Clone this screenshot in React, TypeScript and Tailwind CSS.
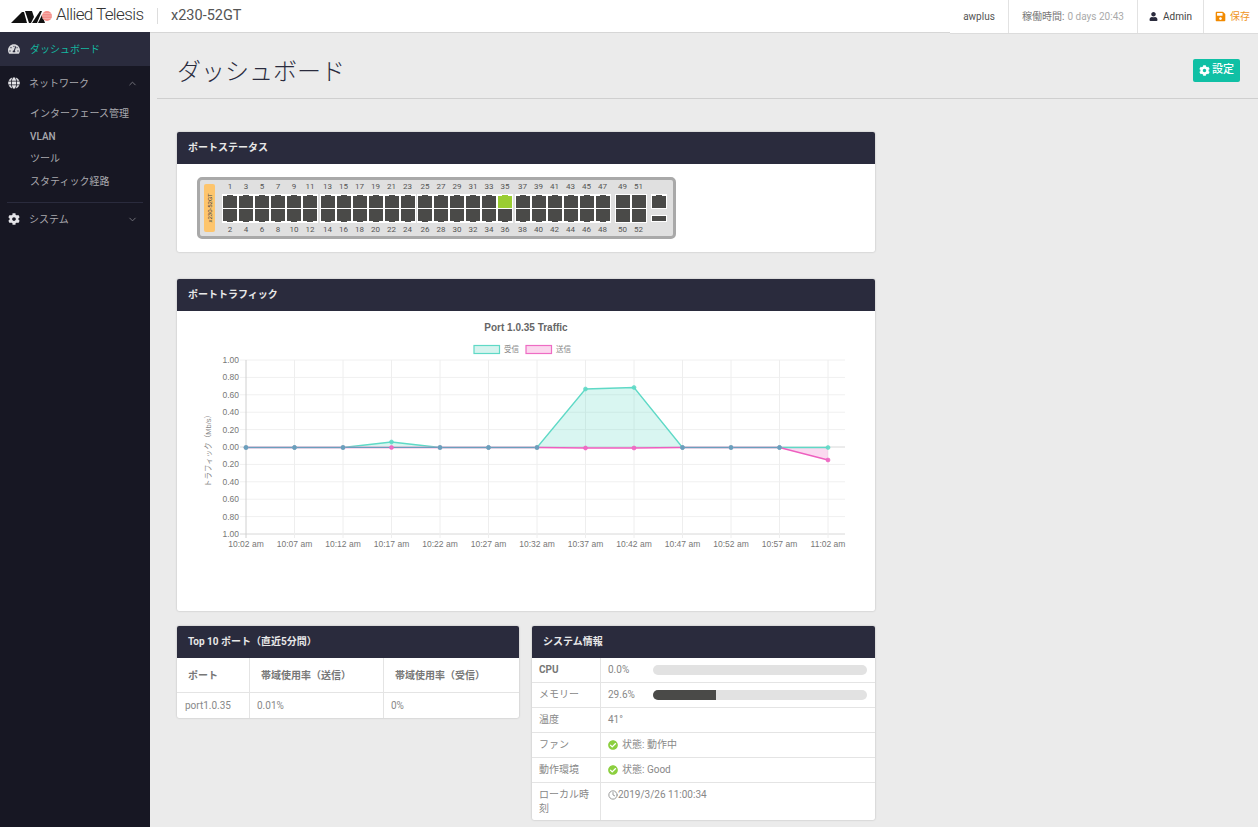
import React from "react";
import { ChevronUp, ChevronDown } from "lucide-react";
import { FaTachometerAlt, FaGlobe, FaCog, FaCheckCircle, FaSave, FaUser } from "react-icons/fa";
import { FiClock } from "react-icons/fi";

const FONT = "[font-family:Roboto,'Noto_Sans_CJK_JP',sans-serif]";
const CHART_FONT = "'Liberation Sans', 'Noto Sans CJK JP', sans-serif";

function Logo() {
  return (
    <svg width="41" height="13" viewBox="0 0 41 13" className="shrink-0">
      <polygon points="0,13 11,2 13,2 16,13" fill="#111" />
      <polygon points="14,1 21,1 23,7 20,13 18,13" fill="#111" />
      <polygon points="21,13 29,1 31,1 26,13" fill="#111" />
      <polygon points="27,13 31,5 34,13" fill="#111" />
      <circle cx="36" cy="6" r="5" fill="#f58f8a" />
      <g stroke="#fff" strokeWidth="0.5" opacity="0.55">
        <line x1="31" y1="3.5" x2="41" y2="3.5" />
        <line x1="31" y1="6" x2="41" y2="6" />
        <line x1="31" y1="8.5" x2="41" y2="8.5" />
      </g>
    </svg>
  );
}

function PortIcon({ bottom, on }: { bottom?: boolean; on?: boolean }) {
  const fill = on ? "#9acd32" : "#4a4a48";
  return (
    <svg width="14" height="13" viewBox="0 0 14 13" className="block">
      {bottom ? (
        <polygon points="0,0 14,0 14,12 10,12 10,13 4,13 4,12 0,12" fill={fill} />
      ) : (
        <polygon points="0,1 4,1 4,0 10,0 10,1 14,1 14,13 0,13" fill={fill} />
      )}
    </svg>
  );
}

function PortGroup({ start, count, sfp }: { start: number; count: number; sfp?: boolean }) {
  const cols = Array.from({ length: count }, (_, i) => start + i * 2);
  return (
    <div className="flex shrink-0 flex-col">
      <div className="flex h-[14px] shrink-0 items-center">
        {cols.map((n) => (
          <span key={n} className="w-4 text-center text-[8px] leading-none text-[#555]">{n}</span>
        ))}
      </div>
      <div className="flex w-fit shrink-0 flex-col gap-[1px] bg-white p-[1px]">
        <div className="flex gap-[2px]">
          {cols.map((n) =>
            sfp ? <div key={n} className="h-[13px] w-[14px] bg-[#4a4a48]" /> : <PortIcon key={n} on={n === 35} />
          )}
        </div>
        <div className="flex gap-[2px]">
          {cols.map((n) =>
            sfp ? <div key={n} className="h-[13px] w-[14px] bg-[#4a4a48]" /> : <PortIcon key={n} bottom />
          )}
        </div>
      </div>
      <div className="flex h-[13px] shrink-0 items-center">
        {cols.map((n) => (
          <span key={n} className="w-4 text-center text-[8px] leading-none text-[#555]">{n + 1}</span>
        ))}
      </div>
    </div>
  );
}

const xs = [246, 294.5, 343, 391.5, 440, 488.5, 537, 585.5, 634, 682.5, 731, 779.5, 828];
const labels = ["10:02 am", "10:07 am", "10:12 am", "10:17 am", "10:22 am", "10:27 am", "10:32 am", "10:37 am", "10:42 am", "10:47 am", "10:52 am", "10:57 am", "11:02 am"];
const rx = [447.5, 447.5, 447.5, 442, 447.5, 447.5, 447.5, 389, 387.5, 447.5, 447.5, 447.5, 447.5];
const tx = [447.5, 447.5, 447.5, 447.5, 447.5, 447.5, 447.5, 448, 448, 447.5, 447.5, 447.5, 460];
const yLabels = ["1.00", "0.80", "0.60", "0.40", "0.20", "0.00", "0.20", "0.40", "0.60", "0.80", "1.00"];

function Chart() {
  // Coordinates below are page coordinates; the viewBox maps them onto the card's body.
  const ys = yLabels.map((_, i) => 360 + i * 17.4);
  const rPts = xs.map((x, i) => `${x},${rx[i]}`).join(" ");
  const tPts = xs.map((x, i) => `${x},${tx[i]}`).join(" ");
  return (
    <svg viewBox="177 311 698 300" width="698" height="300" className="block">
      <text x="526" y="331" textAnchor="middle" fontSize="10" fontWeight="700" fill="#666" fontFamily={CHART_FONT}>Port 1.0.35 Traffic</text>
      <rect x="474" y="345.5" width="25.5" height="8" fill="#d6f3ee" stroke="#5fd9c6" strokeWidth="1.2" />
      <text x="504" y="352" fontSize="7.5" fill="#888" fontFamily={CHART_FONT}>受信</text>
      <rect x="526" y="345.5" width="25.5" height="8" fill="#fbd7ee" stroke="#ee6cc4" strokeWidth="1.2" />
      <text x="556" y="352" fontSize="7.5" fill="#888" fontFamily={CHART_FONT}>送信</text>
      {ys.map((y, i) => (
        <line key={i} x1="240" x2="845" y1={y} y2={y} stroke={i === 5 || i === 10 ? "#d8d8d8" : "#f0f0f0"} strokeWidth="1" />
      ))}
      {xs.map((x, i) => (
        <line key={i} x1={x} x2={x} y1="360" y2="538" stroke={i === 0 ? "#d0d0d0" : "#eeeeee"} strokeWidth="1" />
      ))}
      {yLabels.map((l, i) => (
        <text key={i} x="239" y={ys[i] + 3} textAnchor="end" fontSize="8.5" fill="#777" fontFamily={CHART_FONT}>{l}</text>
      ))}
      {labels.map((l, i) => (
        <text key={i} x={xs[i]} y="546.5" textAnchor="middle" fontSize="8.5" fill="#777" fontFamily={CHART_FONT}>{l}</text>
      ))}
      <text transform="translate(211 449) rotate(-90)" textAnchor="middle" fontSize="7.5" fill="#888" fontFamily={CHART_FONT}>トラフィック（Mb/s）</text>
      <polygon points={`246,447.5 ${rPts} 828,447.5`} fill="#5fd9c6" fillOpacity="0.24" />
      <polygon points={`246,447.5 ${tPts} 828,447.5`} fill="#ee6cc4" fillOpacity="0.26" />
      <polyline points={rPts} fill="none" stroke="#5fd9c6" strokeWidth="1.3" />
      <polyline points={tPts} fill="none" stroke="#ee5fbf" strokeWidth="1.3" />
      <line x1="246" x2="537" y1="447.5" y2="447.5" stroke="#6a9fbd" strokeWidth="1.2" />
      <line x1="682.5" x2="779.5" y1="447.5" y2="447.5" stroke="#6a9fbd" strokeWidth="1.2" />
      {xs.map((x, i) => (
        <circle key={i} cx={x} cy={tx[i]} r="2" fill="#ee6cc4" stroke="#ee5fbf" strokeWidth="0.6" />
      ))}
      {xs.map((x, i) => (
        <circle key={i} cx={x} cy={rx[i]} r="2" fill="#5fd9c6" fillOpacity={rx[i] === tx[i] ? 0.55 : 0.9} stroke="#5fd9c6" strokeWidth="0.6" />
      ))}
      {xs.map((x, i) =>
        rx[i] === tx[i] ? <circle key={i} cx={x} cy={rx[i]} r="2.2" fill="#6a9fbd" /> : null
      )}
    </svg>
  );
}

function Card({ title, children, className }: { title: string; children: React.ReactNode; className?: string }) {
  return (
    <section className={`overflow-hidden rounded-[2px] bg-white shadow-[0_0_2px_rgba(0,0,0,0.25)] ${className ?? ""}`}>
      <h2 className="flex h-8 items-center bg-[#2a2b3d] px-[11px] pb-px text-[10px] font-bold text-[#e8e8e8]">{title}</h2>
      {children}
    </section>
  );
}

function NavHead({ icon, label, chevron, active }: { icon: React.ReactNode; label: string; chevron?: "up" | "down"; active?: boolean }) {
  return (
    <div className={`flex h-[34px] items-center pl-2 pr-3 text-[10px] ${active ? "bg-[#2a2b3d] text-[#14b8a0]" : "text-[#a9a9ae]"}`}>
      <span className={`flex w-[12px] justify-center ${active ? "text-[#d8d8dc]" : "text-[#e4e4e8]"}`}>{icon}</span>
      <span className={active ? "ml-[10px]" : "ml-[9px]"}>{label}</span>
      {chevron === "up" && <ChevronUp size={11} className="ml-auto text-[#77777f]" />}
      {chevron === "down" && <ChevronDown size={11} className="ml-auto text-[#77777f]" />}
    </div>
  );
}

function SysRow({ label, children, h = "h-[25px]", bold }: { label: string; children: React.ReactNode; h?: string; bold?: boolean }) {
  return (
    <div className={`flex border-b border-[#e4e4e4] last:border-b-0 ${h}`}>
      <div className={`w-[69px] shrink-0 border-r border-[#e4e4e4] px-[7px] pt-[5px] text-[10px] leading-[14px] ${bold ? "font-bold text-[#777]" : "text-[#888]"}`}>{label}</div>
      <div className="flex flex-1 items-start px-[7px] pt-[5px] text-[10px] leading-[14px] text-[#888]">{children}</div>
    </div>
  );
}

function Bar({ value, width }: { value: string; width: number }) {
  return (
    <>
      <span className="w-[45px] shrink-0">{value}</span>
      <div className="mt-[2px] h-[10px] w-[214px] overflow-hidden rounded-full bg-[#e2e2e2]">
        <div className="h-full bg-[#4a4a48]" style={{ width }} />
      </div>
    </>
  );
}

function Status({ text }: { text: string }) {
  return (
    <span className="flex items-center gap-[4px]">
      <FaCheckCircle size={10} className="text-[#8ccf3f]" />
      {text}
    </span>
  );
}

export default function App() {
  return (
    <div className={`flex h-[827px] w-[1258px] flex-col overflow-hidden bg-[#ebebeb] ${FONT}`}>
      <header className="relative z-10 flex h-[32px] shrink-0 items-start bg-white shadow-[0_1px_0_#d6d6d6]">
        <div className="flex h-[32px] w-[157px] items-center pl-[11px]">
          <Logo />
          <span className="ml-[4px] -translate-y-[1px] whitespace-nowrap text-[17px] font-light tracking-[-0.6px] text-[#333]">Allied Telesis</span>
        </div>
        <div className="mt-2 h-4 w-px bg-[#dddddd]" />
        <div className="flex h-[32px] items-center pl-[13px] text-[14.5px] text-[#555]">x230-52GT</div>
        <div className="ml-auto flex h-[34px] border-b border-[#dcdcdc] bg-white text-[10px]">
          <div className="flex w-[59px] items-center justify-center border-r border-[#e2e2e2] text-[#555]">awplus</div>
          <div className="flex w-[129px] items-center justify-center border-r border-[#e2e2e2] text-[#777]">
            稼働時間:<span className="ml-[3px] text-[#aaa]">0 days 20:43</span>
          </div>
          <div className="flex w-[66px] items-center justify-center gap-[5px] border-r border-[#e2e2e2] text-[#444]">
            <FaUser size={9} className="text-[#2a2b3d]" />Admin
          </div>
          <div className="flex w-[54px] items-center gap-[4px] pl-[11px] text-[#f0961e]">
            <FaSave size={11} className="text-[#f28a00]" />保存
          </div>
        </div>
      </header>

      <div className="flex min-h-0 flex-1">
        <aside className="relative z-20 w-[150px] shrink-0 bg-[#171723]">
          <NavHead active icon={<FaTachometerAlt size={12} />} label="ダッシュボード" />
          <NavHead icon={<FaGlobe size={12} />} label="ネットワーク" chevron="up" />
          <ul className="mt-[4px] space-y-[3.5px] pl-[30px] text-[10px] text-[#a9a9ae]">
            <li className="h-[19px] leading-[19px]">インターフェース管理</li>
            <li className="h-[19px] font-medium leading-[19px]">VLAN</li>
            <li className="h-[19px] leading-[19px]">ツール</li>
            <li className="h-[19px] leading-[19px]">スタティック経路</li>
          </ul>
          <div className="mx-[7px] mt-[11.5px] h-px bg-[#2a2b3d]" />
          <div className="-mt-px">
            <NavHead icon={<FaCog size={12} />} label="システム" chevron="down" />
          </div>
        </aside>

        <main className="min-w-0 flex-1 pl-[7px]">
          <div className="flex h-[67px] items-center justify-between border-b border-[#cfcfcf] pl-5 pr-[18px] pt-[10px]">
            <h1 className="mt-1 text-[24px] font-light text-[#2a2b3d]">ダッシュボード</h1>
            <button className="flex h-[23px] items-center gap-[2px] rounded-[2px] bg-[#10c0a5] px-[6px] text-[11px] font-medium text-white">
              <FaCog size={11} />設定
            </button>
          </div>

          <div className="ml-5 flex w-[698px] flex-col pt-[33px]">
            <Card title="ポートステータス">
              <div className="flex h-[88px] items-start pl-5 pt-[13px]">
                <div className="flex h-[62px] w-[479px] rounded-[5px] border-[3px] border-[#a9a9a9] bg-[#e0e0e0] pl-1">
                  <div className="mr-[7px] mt-1 flex h-[48px] w-[11px] items-center justify-center rounded-[2px] bg-[#fdc56d]">
                    <span className="-rotate-90 whitespace-nowrap text-[6px] leading-none text-[#444]">x230-52GT</span>
                  </div>
                  <div className="flex gap-[1.5px]">
                    <PortGroup start={1} count={6} />
                    <PortGroup start={13} count={6} />
                    <PortGroup start={25} count={6} />
                    <PortGroup start={37} count={6} />
                  </div>
                  <div className="ml-1">
                    <PortGroup start={49} count={2} sfp />
                  </div>
                  <div className="ml-1 mt-[14px] flex flex-col items-center">
                    <div className="bg-white p-[1px]"><PortIcon /></div>
                    <div className="mt-[6px] flex h-[7px] w-[16px] items-center bg-white p-[1px]"><div className="h-[5px] w-full bg-[#4a4a48]" /></div>
                  </div>
                </div>
              </div>
            </Card>

            <Card title="ポートトラフィック" className="mt-[27px]">
              <Chart />
            </Card>

            <div className="mt-[15px] flex items-start gap-[13px]">
              <Card title="Top 10 ポート（直近5分間）" className="w-[342px]">
                <div className="flex h-[35px] border-b border-[#e4e4e4] text-[10px] font-bold text-[#777]">
                  <div className="flex w-[73px] items-center border-r border-[#e4e4e4] pl-[11px]">ポート</div>
                  <div className="flex w-[134px] items-center border-r border-[#e4e4e4] pl-[11px]">帯域使用率（送信）</div>
                  <div className="flex flex-1 items-center pl-[11px]">帯域使用率（受信）</div>
                </div>
                <div className="flex h-[25px] text-[10px] text-[#888]">
                  <div className="flex w-[73px] items-center border-r border-[#e4e4e4] pl-[8px]">port1.0.35</div>
                  <div className="flex w-[134px] items-center border-r border-[#e4e4e4] pl-[7px]">0.01%</div>
                  <div className="flex flex-1 items-center pl-[7px]">0%</div>
                </div>
              </Card>

              <Card title="システム情報" className="w-[343px]">
                <SysRow label="CPU" bold><Bar value="0.0%" width={0} /></SysRow>
                <SysRow label="メモリー"><Bar value="29.6%" width={63} /></SysRow>
                <SysRow label="温度">41°</SysRow>
                <SysRow label="ファン"><Status text="状態: 動作中" /></SysRow>
                <SysRow label="動作環境"><Status text="状態: Good" /></SysRow>
                <SysRow label="ローカル時刻" h="h-[37px]">
                  <span className="flex items-center"><FiClock size={10} />2019/3/26 11:00:34</span>
                </SysRow>
              </Card>
            </div>
          </div>
        </main>
      </div>
    </div>
  );
}
